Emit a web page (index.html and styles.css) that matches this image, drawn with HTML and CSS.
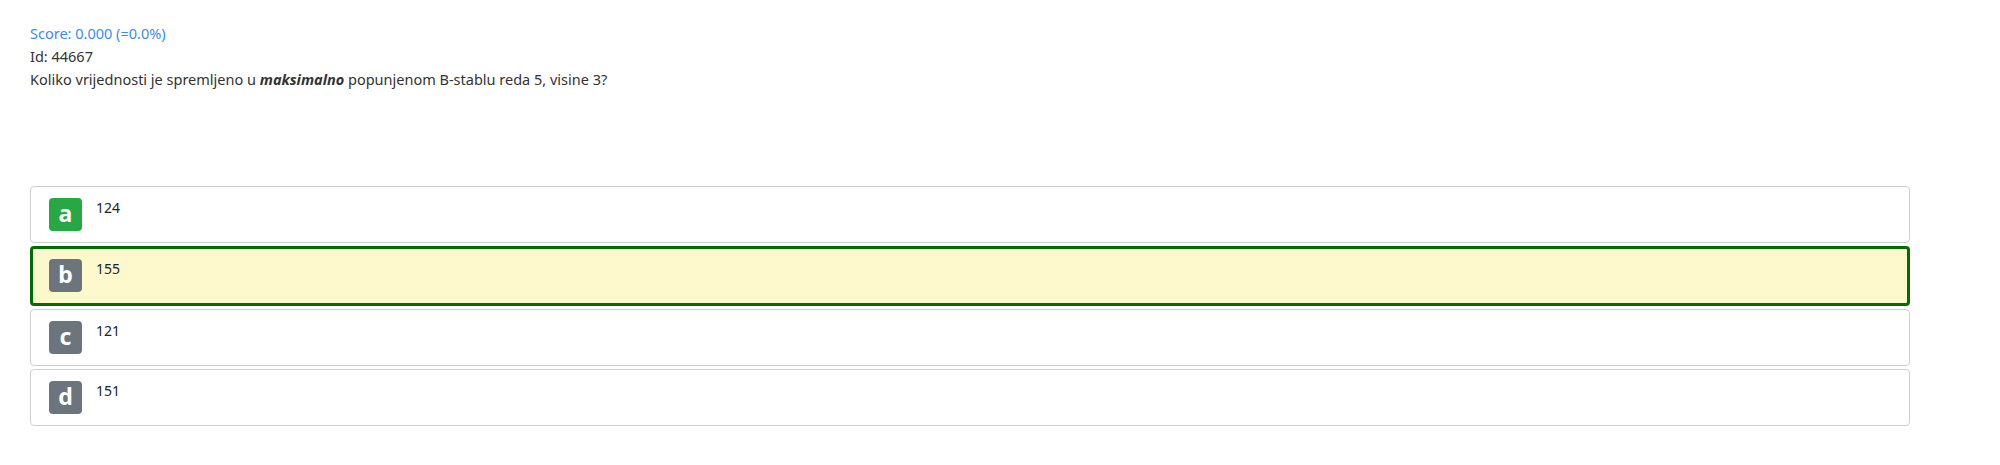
FILE: index.html
```html
<!DOCTYPE html>
<html lang="hr">
<head>
    <meta charset="UTF-8">
    <title>Pitanje 44667</title>
    <link rel="stylesheet" href="styles.css">
</head>

<body>
    <div class="question-box">
        <div class="question-head">
            <div class="score">Score: 0.000 (=0.0%)</div>
            <div class="question-id">Id: 44667</div>
            <div class="question-text">Koliko vrijednosti je spremljeno u <strong><em>maksimalno</em></strong> popunjenom B-stablu reda 5, visine 3?</div>
        </div>

        <div class="answers">
            <div class="answer">
                <span class="badge badge-correct">a</span>
                <span class="answer-text">124</span>
            </div>
            <div class="answer answer-selected">
                <span class="badge">b</span>
                <span class="answer-text">155</span>
            </div>
            <div class="answer">
                <span class="badge">c</span>
                <span class="answer-text">121</span>
            </div>
            <div class="answer">
                <span class="badge">d</span>
                <span class="answer-text">151</span>
            </div>
        </div>
    </div>
</body>
</html>
```

FILE: styles.css
```css
body {
    font-family: "Noto Sans", "Open Sans", sans-serif;
    margin: 0;
    background-color: #fff;
    color: #212529;
}

.question-box {
    width: 1880px;
    padding: 22px 0 0 30px;
}

.question-head {
    font-size: 14.5px;
    line-height: 23px;
    color: #333;
    margin-bottom: 95px;
}

.score {
    color: #3d8af7;
}

.answers {
    display: flex;
    flex-direction: column;
    gap: 3px;
}

.answer {
    display: flex;
    align-items: flex-start;
    height: 57px;
    box-sizing: border-box;
    padding: 11px 18px;
    border: 1px solid #cfcfcf;
    border-radius: 4px;
    background-color: #fff;
}

.answer-selected {
    height: 60px;
    border: 3px solid #046c04;
    padding: 10px 16px;
    background-color: #fef8cd;
}

.badge {
    display: flex;
    align-items: center;
    justify-content: center;
    width: 33px;
    height: 33px;
    border-radius: 4px;
    background-color: #6c757d;
    color: #fff;
    font-weight: bold;
    font-size: 23px;
    line-height: 1;
    padding-bottom: 2px;
    box-sizing: border-box;
}

.badge-correct {
    background-color: #28a745;
}

.answer-text {
    margin-left: 14px;
    margin-top: 1px;
    font-size: 14px;
    line-height: 18px;
}
```
